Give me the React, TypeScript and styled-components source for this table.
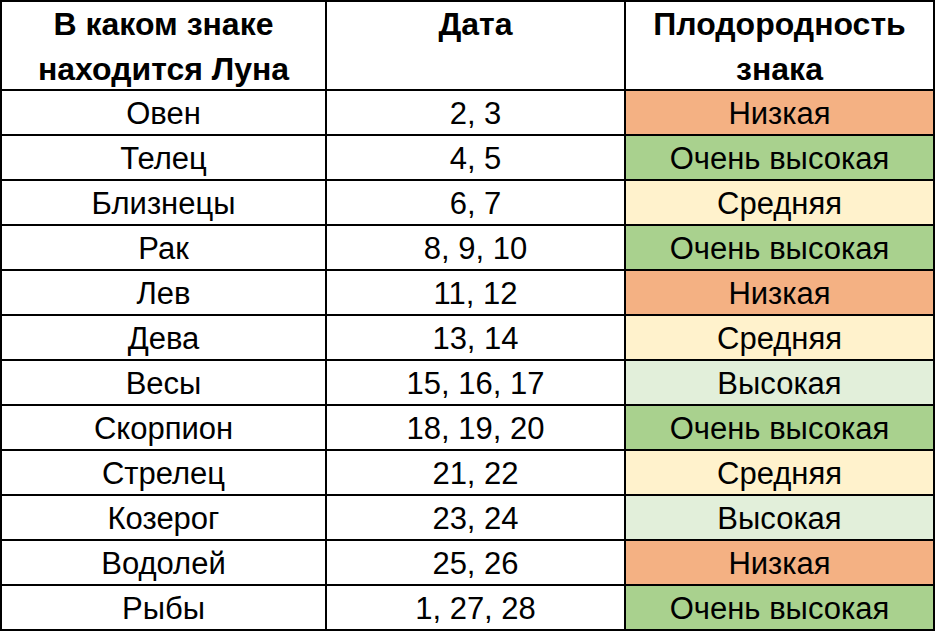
import styled, { createGlobalStyle } from "styled-components";

const GlobalStyle = createGlobalStyle`
  html, body {
    margin: 0;
    padding: 0;
    background: #ffffff;
  }
`;

type Level = "low" | "mid" | "high" | "top";

interface IRow {
  sign: string;
  dates: string;
  level: Level;
}

const levelText: Record<Level, string> = {
  low: "Низкая",
  mid: "Средняя",
  high: "Высокая",
  top: "Очень высокая",
};

const levelColor: Record<Level, string> = {
  low: "#f4b183",
  mid: "#fff2cc",
  high: "#e2efda",
  top: "#a9d18e",
};

const rows: IRow[] = [
  { sign: "Овен", dates: "2, 3", level: "low" },
  { sign: "Телец", dates: "4, 5", level: "top" },
  { sign: "Близнецы", dates: "6, 7", level: "mid" },
  { sign: "Рак", dates: "8, 9, 10", level: "top" },
  { sign: "Лев", dates: "11, 12", level: "low" },
  { sign: "Дева", dates: "13, 14", level: "mid" },
  { sign: "Весы", dates: "15, 16, 17", level: "high" },
  { sign: "Скорпион", dates: "18, 19, 20", level: "top" },
  { sign: "Стрелец", dates: "21, 22", level: "mid" },
  { sign: "Козерог", dates: "23, 24", level: "high" },
  { sign: "Водолей", dates: "25, 26", level: "low" },
  { sign: "Рыбы", dates: "1, 27, 28", level: "top" },
];

const App = () => {
  return (
    <>
      <GlobalStyle />
      <Table>
        <HeadCell>
          В каком знаке
          <br />
          находится Луна
        </HeadCell>
        <HeadCell>Дата</HeadCell>
        <HeadCell>
          Плодородность
          <br />
          знака
        </HeadCell>
        {rows.map((row) => (
          <Row key={row.sign}>
            <Cell>{row.sign}</Cell>
            <Cell>{row.dates}</Cell>
            <Cell $bg={levelColor[row.level]}>{levelText[row.level]}</Cell>
          </Row>
        ))}
      </Table>
    </>
  );
};

export default App;

const Table = styled.div`
  display: grid;
  grid-template-columns: 323px 297px 307px;
  grid-template-rows: 87px;
  grid-auto-rows: 43px;
  gap: 2px;
  padding: 2px;
  width: 935px;
  box-sizing: border-box;
  background: #000000;
  font-family: "Liberation Sans", Arial, sans-serif;
  color: #000000;
`;

const Row = styled.div`
  display: contents;
`;

const HeadCell = styled.div`
  background: #ffffff;
  text-align: center;
  font-weight: bold;
  font-size: 32px;
  line-height: 45px;
  white-space: nowrap;
`;

const Cell = styled.div<{ $bg?: string }>`
  display: flex;
  align-items: center;
  justify-content: center;
  padding-top: 2px;
  background: ${(p) => p.$bg || "#ffffff"};
  font-size: 31px;
  white-space: nowrap;
`;
